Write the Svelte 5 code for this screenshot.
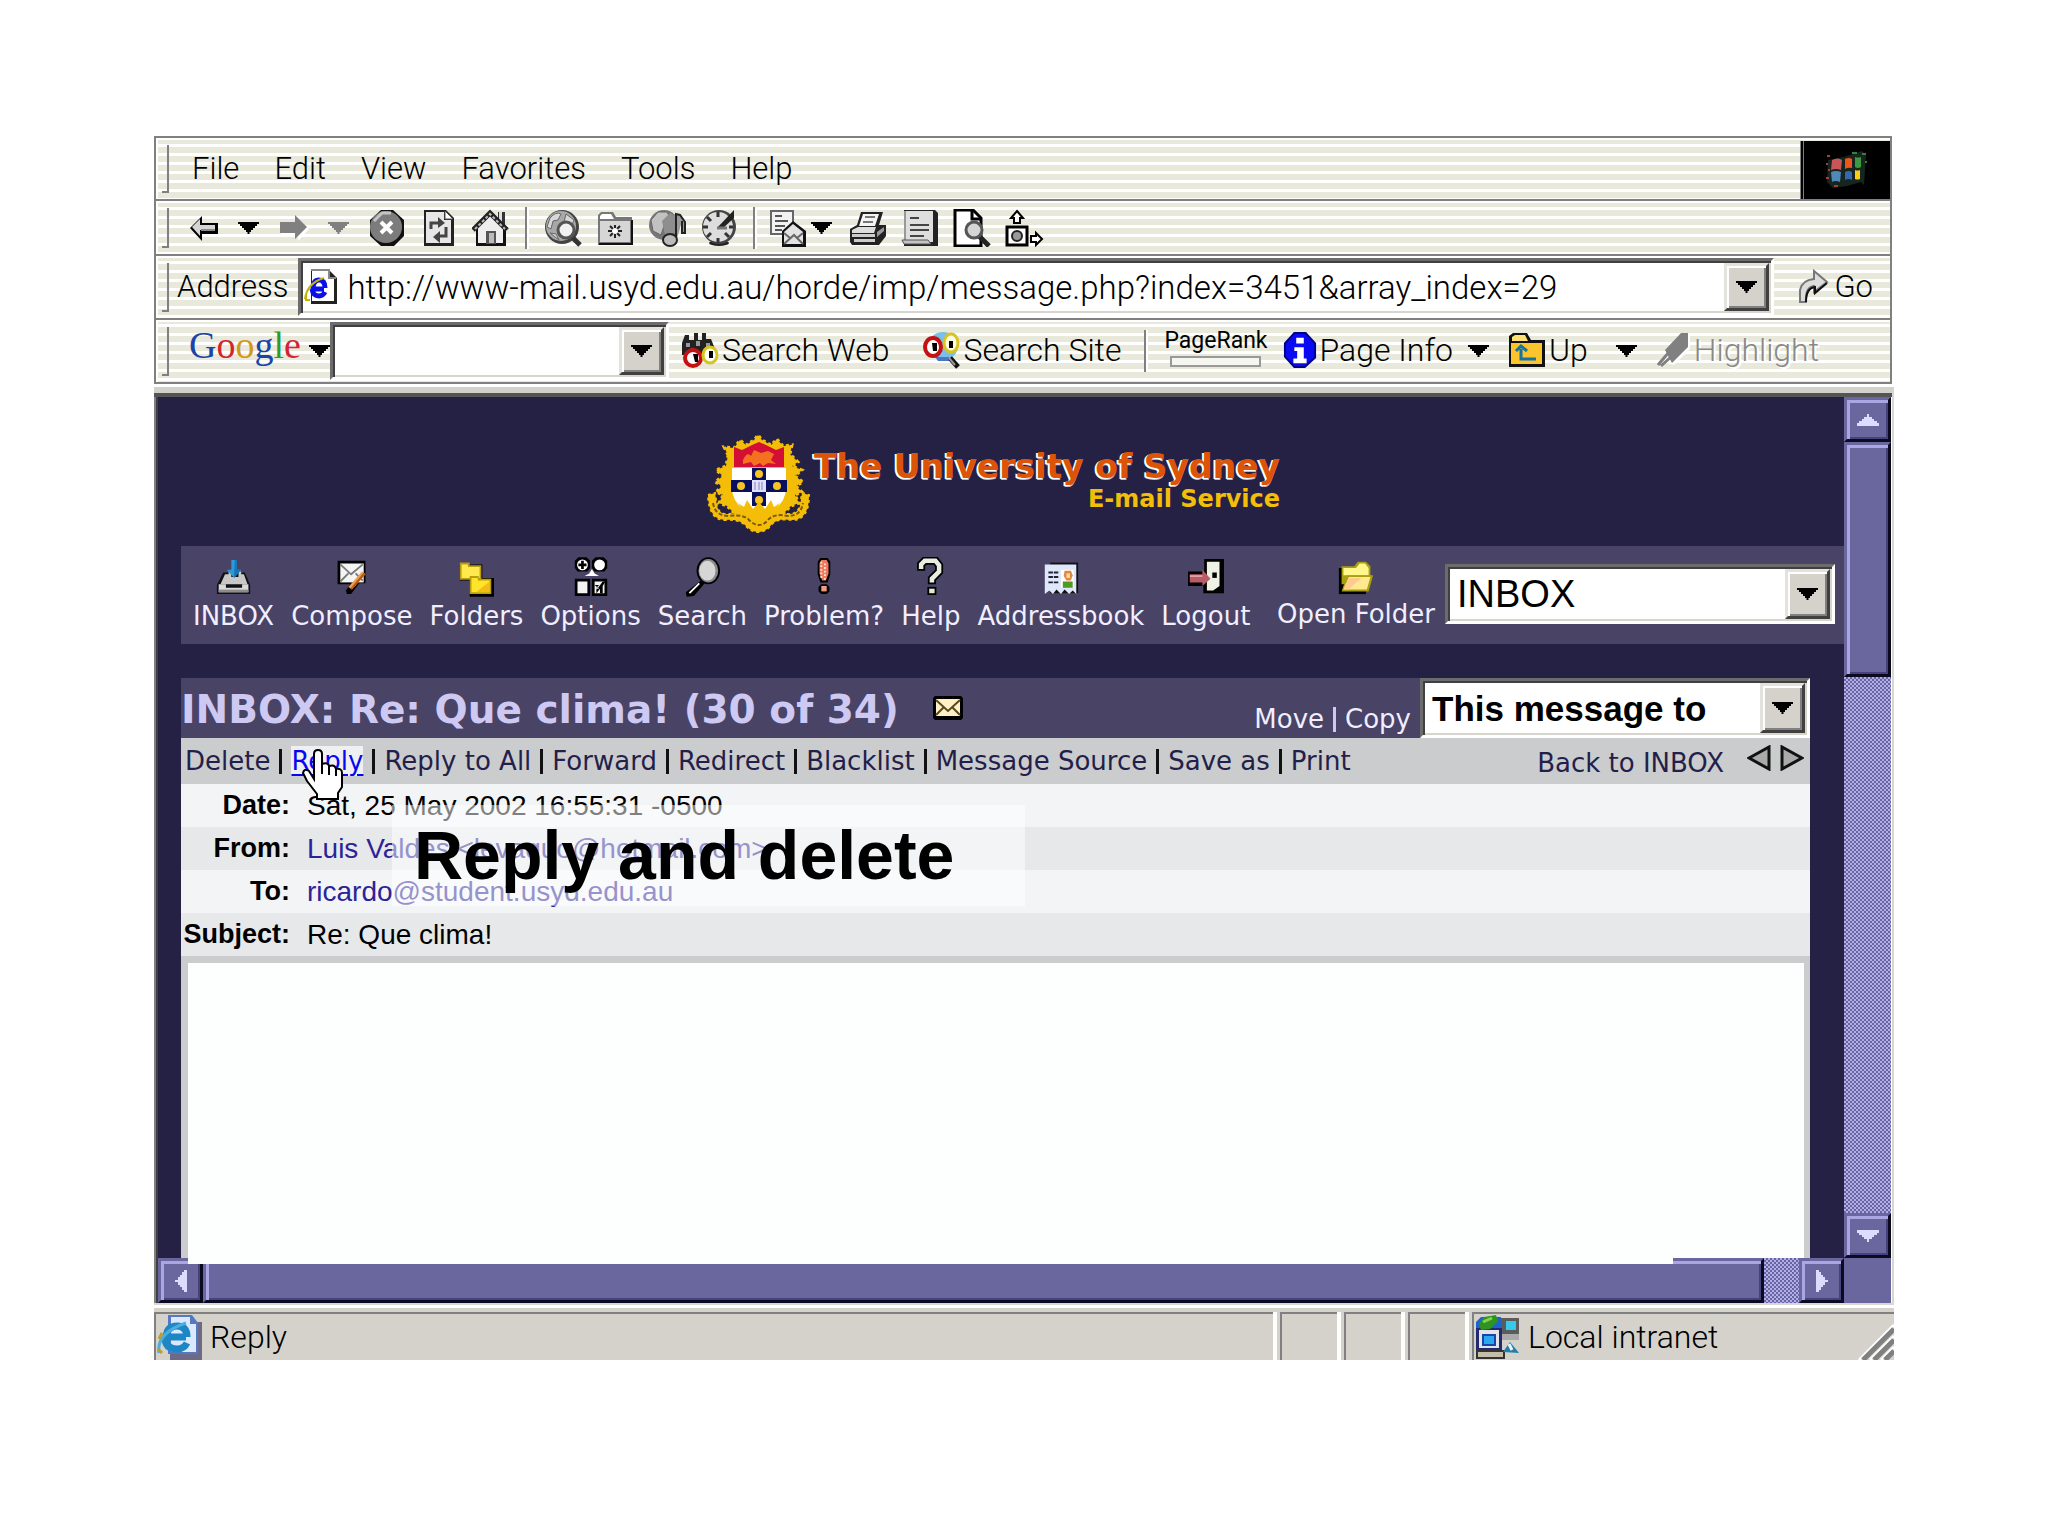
<script>
  const menus = ['File', 'Edit', 'View', 'Favorites', 'Tools', 'Help'];
  const navItems = ['INBOX', 'Compose', 'Folders', 'Options', 'Search', 'Problem?', 'Help', 'Addressbook', 'Logout'];
  const actions = ['Delete', 'Reply', 'Reply to All', 'Forward', 'Redirect', 'Blacklist', 'Message Source', 'Save as', 'Print'];
  const google = [['G', 'blue'], ['o', 'red'], ['o', 'gold'], ['g', 'blue'], ['l', 'green'], ['e', 'red']];
  let url = $state('http://www-mail.usyd.edu.au/horde/imp/message.php?index=3451&array_index=29');
  let query = $state('');
</script>

{#snippet caret(color)}
  <svg class="caret" width="21" height="12" viewBox="0 0 21 12" aria-hidden="true"><path fill={color} d="M0 0H21V2H19V4H17V6H15V8H13V10H11.500V12H9.500V10H8V8H6V6H4V4H2V2H0z" /></svg>
{/snippet}

{#snippet handle()}<span class="handle"></span>{/snippet}

{#snippet navIcon(name)}
  <svg width="36" height="40" viewBox="0 0 40 44" aria-hidden="true">
    {#if name === 'INBOX'}
      <path d="M8 17h24l6 14v10H1V31z" fill="#111" />
      <path d="M10 19h4v-3h3v6h8v-6h3v3h3l4 11H5z" fill="#c8c8c8" />
      <path d="M3 30h8v4h18v-4h7v9H3z" fill="#dadada" /><path d="M3 36h33v3H3z" fill="#8c8c8c" />
      <path d="M17 3h6v11h5l-8 9-8-9h5z" fill="#2b9bd8" /><path d="M21 3h2v11h5l-8 9z" fill="#1774b5" />
    {:else if name === 'Compose'}
      <path d="M4 4h31v25h-7l-9 12h-5v-5l4-6H4z" fill="#000" />
      <path d="M7 7h26v21H7z" fill="#f4f4f4" /><path d="M7 8l12 11L32 8M7 27l9-9M24 18l8 8" fill="none" stroke="#777" stroke-width="2" />
      <path d="M31 16l4 3-15 17-4-3z" fill="#f0a050" /><path d="M33 17l2 2-15 17-2-1z" fill="#b35a10" /><path d="M13 37l4-3 2 2-4 4z" fill="#000" />
    {:else if name === 'Folders'}
      <path d="M2 8h25v18H2zM13 23h27v21H13z" fill="#000" />
      <path d="M2 6h11v3h13v16H2z" fill="#b99c10" /><path d="M4 8h7v3h13v12H4z" fill="#ffe94c" />
      <path d="M13 21h10v3h14v17H13z" fill="#b99c10" /><path d="M15 23h7v3h13v13H15z" fill="#ffe52a" /><path d="M35 27v12H20z" fill="#f4bc14" />
    {:else if name === 'Options'}
      <path d="M6 0h9l4 4v8l-3 4H5l-3-4V4zM25 0h9l4 4v8l-3 4H24l-3-4V4zM2 24h17v19H2zM21 24h17v19H21z" fill="#000" />
      <circle cx="10.500" cy="8.500" r="6" fill="#fff" /><circle cx="29.500" cy="8.500" r="6" fill="#fff" />
      <path d="M9 4h3v3h3v3h-3v3H9v-3H6V7h3z" fill="#000" /><path d="M21 13l3 5 5 3H13l5-3z" fill="#fff" />
      <path d="M5 27h11v13H5zM24 27h11v13H24z" fill="#f2f2f2" /><path d="M24 31h5l-3 3h2l5-7h3l-3 5v8h-3v-5l-4 5v-5h3z" fill="#000" />
    {:else if name === 'Search'}
      <path d="M19 26l4 3-12 14-8 1-1-5z" fill="#000" /><ellipse cx="27" cy="15" rx="13" ry="15" fill="#000" />
      <ellipse cx="27" cy="15" rx="11" ry="13" fill="#8a8a8a" /><ellipse cx="26" cy="15" rx="9" ry="11" fill="#d6d6d6" />
      <path d="M6 40l11-11" stroke="#fff" stroke-width="2" />
    {:else if name === 'Problem?'}
      <path d="M16 1h8l3 4v14l-3 9h-8l-3-9V5zM17 30h6l3 3v5l-3 3h-6l-3-3v-5z" fill="#000" />
      <path d="M17 3h6l2 4v11l-3 8h-4l-3-8V7z" fill="#f0795c" /><path d="M17 5v20M21 7v18" stroke="#ffe6dc" stroke-width="2" stroke-dasharray="2 2" /><path d="M17 32h6v6h-6z" fill="#f09a80" />
    {:else if name === 'Help'}
      <path d="M9 15V8l4-4h12l4 5v7l-8 8v6" fill="none" stroke="#000" stroke-width="9" />
      <path d="M9 13V8l4-4h12l4 5v7l-8 8v4" fill="none" stroke="#e8efe0" stroke-width="5" />
      <path d="M16 33h10v9H16z" fill="#000" /><path d="M18 35h6v5h-6z" fill="#dfeccb" />
    {:else if name === 'Addressbook'}
      <path d="M8 6h31v34H8z" fill="#111" /><path d="M2 8h35v33l-4-4-4 4-5-5-4 5-5-5-4 5-4-4-5 4z" fill="#dfe8fa" />
      <path d="M6 17h12M6 22h12M6 28h12" stroke="#223" stroke-width="2" stroke-dasharray="5 1" />
      <path d="M20 14h14v20H20z" fill="#fff" /><path d="M24 15h7l2 5-2 6h-5l-3-5z" fill="#e3883a" /><path d="M26 18h4v5h-4z" fill="#ffd7a8" /><path d="M22 27h11v7H22z" fill="#4f9a24" />
    {:else if name === 'Logout'}
      <path d="M18 2h22v38H17v-8H0V16h18z" fill="#000" /><path d="M21 5h14v27l-7 5h-7z" fill="#eef2e4" />
      <path d="M27 17h5v6h-5z" fill="#000" /><path d="M2 19h14v-5l9 10-9 8v-4H2z" fill="#b75c68" /><path d="M2 21h14" stroke="#e5a0a5" stroke-width="2" />
    {:else}
      <path d="M1 12h30v29H1z" fill="#000" /><path d="M4 10h14l4-5h9l5 5v20H4z" fill="#a8a010" /><path d="M6 12h14l4-5h6l4 5v8H6z" fill="#fff68c" />
      <path d="M10 20h29l-5 18H4z" fill="#a8a010" /><path d="M12 22h24l-4 14H6z" fill="#ffe890" /><path d="M12 23h14L11 36H7z" fill="#ffc890" />
    {/if}
  </svg>
{/snippet}

<main>
  <section class="chrome">
    <div class="row menu">
      {@render handle()}
      <nav class="menus">{#each menus as m}<button type="button">{m}</button>{/each}</nav>
      <span class="flag">
        <svg width="46" height="40" viewBox="0 0 46 40" aria-hidden="true">
          <path d="M4 10l16-3 18-6 4 4-2 30-3-3-14 4-14 2-6-6z" fill="#17251f" />
          <path d="M8 10q6-3 10 0l-1 10q-5-2-10 0z" fill="#c9545a" /><path d="M7 22q5-2 10 0l-1 10q-5-2-8 0z" fill="#5088b8" />
          <path d="M21 9q4-2 7 0v9q-4-1-7 1z" fill="#ee5518" /><path d="M21 22q4-2 7 0v8q-4-2-7 0z" fill="#3566b0" />
          <path d="M31 7q3 1 6 0v10q-3 2-6 0z" fill="#3d9940" /><path d="M31 20q3 1 5 0v9q-3 1-5 0z" fill="#f7d016" />
          <path d="M3 6h3M2 14h2M4 20h2M2 28h3M10 36h4" stroke="#a04040" stroke-width="2" /><path d="M28 3h5M38 4h4M41 12h2" stroke="#348044" stroke-width="2" />
        </svg>
      </span>
    </div>

    <div class="row tools">
      {@render handle()}
      <button type="button" class="slot narrow" aria-label="Back"><svg width="30" height="28" viewBox="0 0 30 28"><path d="M1 14L13 2v7h16v11H13v7z" fill="#000" /><path d="M3 13L11 5v6h15v5H11v6z" fill="#d5d5d5" /><path d="M12 16h14" stroke="#888" stroke-width="2" /></svg></button>
      <button type="button" class="slot narrow" aria-label="Back history">{@render caret('#000')}</button>
      <button type="button" class="slot narrow" aria-label="Forward"><svg width="30" height="28" viewBox="0 0 30 28"><path d="M2 10h17V4l11 11-11 12v-6H2z" fill="#fff" /><path d="M1 8h15V1l12 12-12 12v-6H1z" fill="#808080" /></svg></button>
      <button type="button" class="slot narrow" aria-label="Forward history">{@render caret('#808080')}</button>
      <button type="button" class="slot" aria-label="Stop"><svg width="38" height="38" viewBox="0 0 38 38"><path d="M13 1h12l11 10v16L26 37H13L2 27V11z" fill="#111" /><circle cx="18" cy="18" r="16" fill="#7c7c7c" /><path d="M6 12l8-8h9" fill="none" stroke="#c4c4c4" stroke-width="3" /><path d="M13 13l11 11M24 13L13 24" stroke="#fff" stroke-width="4" /></svg></button>
      <button type="button" class="slot" aria-label="Refresh"><svg width="34" height="38" viewBox="0 0 34 38"><path d="M2 1h22l8 8v28H2z" fill="#222" /><path d="M4 3h18v8h7v23H4z" fill="#e6e6e6" /><path d="M23 2v8h8z" fill="#fff" stroke="#555" /><path d="M9 20v-6h9M24 18v9h-8" fill="none" stroke="#444" stroke-width="3" /><path d="M16 8l7 6-7 5zM18 22l-7 6 7 6z" fill="#444" /></svg></button>
      <button type="button" class="slot" aria-label="Home"><svg width="38" height="38" viewBox="0 0 38 38"><path d="M4 20h30v17H4z" fill="#111" /><path d="M18 6l13 13v15H6V19z" fill="#eee" /><path d="M26 3h7v16l-7-6z" fill="#333" /><path d="M27 3h3v11l-3-3z" fill="#ddd" /><path d="M1 21L18 4l17 17" fill="none" stroke="#222" stroke-width="5" /><path d="M3 20L18 5l15 15" fill="none" stroke="#bbb" stroke-width="2" stroke-dasharray="3 2" /><path d="M14 22h10v13H14z" fill="#555" /><path d="M17 24h5v10h-5z" fill="#bbb" /></svg></button>
      <span class="sep"></span>
      <button type="button" class="slot" aria-label="Search"><svg width="38" height="38" viewBox="0 0 38 38"><circle cx="18" cy="18" r="17" fill="#444" /><circle cx="17" cy="17" r="15" fill="#a8a8a8" /><path d="M6 9q6-7 11-4l-3 6-5 1-2 8-4-2zM22 5l8 6-2 5-8-3zM6 24l6 1 3 6z" fill="#d8d8d8" stroke="#666" /><path d="M29 29l7 7" stroke="#333" stroke-width="5" /><circle cx="22" cy="21" r="8" fill="#f2f2f2" stroke="#555" stroke-width="3" /></svg></button>
      <button type="button" class="slot" aria-label="Favorites"><svg width="38" height="36" viewBox="0 0 38 36"><path d="M2 9V5l3-3h12l3 5h16v28H2z" fill="#777" /><path d="M4 9V6l2-2h9l3 5z" fill="#fff" /><path d="M4 11h30v21H4z" fill="#d6d6d6" /><path d="M36 10v24H3" fill="none" stroke="#111" stroke-width="2" /><path d="M19 15v13M12 21h14M14 16l10 10M24 16L14 26" stroke="#222" stroke-width="2" /><circle cx="19" cy="21" r="3" fill="#fff" /></svg></button>
      <button type="button" class="slot" aria-label="Media"><svg width="38" height="38" viewBox="0 0 38 38"><circle cx="16" cy="16" r="15" fill="#777" /><path d="M3 11l7-8h9l4 7-6 4-4 12-8-4z" fill="#c2c2c2" stroke="#666" /><path d="M14 12l8-8 7 4-2 16-10 2z" fill="#8e8e8e" /><path d="M28 33V5l4 1 5 7v11h-3V12" fill="#999" stroke="#222" stroke-width="2" /><ellipse cx="22" cy="31" rx="7" ry="6" fill="#bbb" stroke="#222" stroke-width="2" /></svg></button>
      <button type="button" class="slot" aria-label="History"><svg width="38" height="38" viewBox="0 0 38 38"><ellipse cx="19" cy="34" rx="10" ry="3" fill="#222" /><circle cx="19" cy="18" r="17" fill="#444" /><circle cx="18" cy="18" r="15" fill="#ddd" /><path d="M18 3v5M18 29v5M3 18h5M29 18h4M7 8l4 4M7 28l4-4M29 28l-4-4" stroke="#333" stroke-width="3" /><path d="M17 19L34 1v8L22 20z" fill="#222" /><path d="M17 19h10" stroke="#777" stroke-width="3" /></svg></button>
      <span class="sep"></span>
      <button type="button" class="slot mail" aria-label="Mail"><svg width="38" height="38" viewBox="0 0 38 38"><path d="M1 1h24v25H1z" fill="#666" /><path d="M3 3h20v21H3z" fill="#f2f2f2" /><path d="M6 7h7M6 12h13M6 17h10M6 21h7" stroke="#555" stroke-width="2" /><path d="M13 22l11-10 13 10v16H13z" fill="#111" /><path d="M15 23l9-8 10 8v12H15z" fill="#e3e3e3" /><path d="M15 35l10-9 9 9M15 24l6 5M34 24l-6 5" fill="none" stroke="#666" stroke-width="2" /></svg>{@render caret('#000')}</button>
      <button type="button" class="slot" aria-label="Print"><svg width="38" height="36" viewBox="0 0 38 36"><path d="M12 2h22l-4 13h7v11l-7 9H3l-2-3V19l7-4z" fill="#222" /><path d="M14 4h16l-4 12H10z" fill="#f4f4f4" /><path d="M16 7h10M14 12h10" stroke="#777" stroke-width="2" /><path d="M3 20l6-3h18l-2 6H3z" fill="#ddd" /><path d="M3 24h23v3H3zM5 29h21v3H5z" fill="#ccc" /><path d="M28 22l7-5v4l-7 6z" fill="#999" /></svg></button>
      <button type="button" class="slot" aria-label="Edit"><svg width="38" height="38" viewBox="0 0 38 38"><path d="M3 1h31l3 3v33H3z" fill="#222" /><path d="M4 2h28v31H4z" fill="#dedede" /><path d="M4 2v31" stroke="#999" stroke-width="2" /><path d="M9 9h9M9 16h19M9 21h19M9 27h14" stroke="#444" stroke-width="2" /><path d="M1 31h26l3 4H3z" fill="#c4c4c4" stroke="#555" /></svg></button>
      <button type="button" class="slot" aria-label="Print preview"><svg width="38" height="38" viewBox="0 0 38 38"><path d="M2 1h18l8 8v28H2z" fill="#fff" stroke="#000" stroke-width="3" /><path d="M19 1v9h9" fill="none" stroke="#000" stroke-width="3" /><path d="M26 27l10 10" stroke="#222" stroke-width="5" /><circle cx="21" cy="21" r="8" fill="#d5d5d5" stroke="#555" stroke-width="3" /></svg></button>
      <button type="button" class="slot" aria-label="Move"><svg width="40" height="38" viewBox="0 0 40 38"><path d="M3 18h20v18H3z" fill="#fff" stroke="#000" stroke-width="3" /><circle cx="13" cy="27" r="5" fill="#999" stroke="#222" stroke-width="2" /><path d="M13 2l6 7h-3v5h-6V9H7zM38 30l-6-6v3h-5v6h5v3z" fill="#fff" stroke="#000" stroke-width="2" /></svg></button>
    </div>

    <div class="row address">
      {@render handle()}
      <label for="address">Address</label>
      <span class="combo">
        <svg class="page-icon" width="34" height="36" viewBox="0 0 34 36" aria-hidden="true"><path d="M7 1h18l8 8v26H7z" fill="#222" /><path d="M8 2h16v8h6v22H8z" fill="#fff" /><path d="M7 1h18v8h7" fill="none" stroke="#888" stroke-width="2" /><path d="M20 20H9q0-9 6-9t6 8M8 20q1 7 7 7 4 0 6-4" fill="none" stroke="#0a10e8" stroke-width="5" /><path d="M1 30Q3 14 20 9M2 25v6h4" fill="none" stroke="#c2b400" stroke-width="2" /></svg>
        <input id="address" type="text" bind:value={url} />
        <button type="button" class="drop" aria-label="Show addresses">{@render caret('#000')}</button>
      </span>
      <button type="button" class="go"><svg width="32" height="36" viewBox="0 0 32 36" aria-hidden="true"><path d="M5 33H2V21q2-10 14-11V2l13 11-13 10v-6q-9 1-8 16z" fill="#ddd" stroke="#777" stroke-width="2" /><path d="M29 14L17 24v-6q-9 1-9 15" fill="none" stroke="#111" stroke-width="2" /></svg>Go</button>
    </div>

    <div class="row google">
      {@render handle()}
      <button type="button" class="brand" aria-label="Google menu">{#each google as [c, tone]}<span class={tone}>{c}</span>{/each}</button>
      {@render caret('#000')}
      <span class="combo search">
        <input type="text" aria-label="Search terms" bind:value={query} />
        <button type="button" class="drop" aria-label="Show searches">{@render caret('#000')}</button>
      </span>
      <button type="button" class="tool web"><svg width="38" height="38" viewBox="0 0 38 38" aria-hidden="true"><path d="M4 4h4v5h5V2h4v7h4V2h4v6h5l4 10-2 6H1V12z" fill="#222" /><path d="M5 12h4v4H5zM15 10h4v5h-4zM25 12h4v4h-4zM10 17h3v3h-3z" fill="#999" /><ellipse cx="12" cy="27" rx="8" ry="8" fill="#fff" stroke="#c41212" stroke-width="4" /><path d="M12 23h5v8h-3z" fill="#000" /><ellipse cx="29" cy="24" rx="7" ry="8" fill="#fff" stroke="#d8c420" stroke-width="3" /><path d="M28 20h4v7h-4z" fill="#000" /></svg>Search Web</button>
      <button type="button" class="tool site"><svg width="38" height="38" viewBox="0 0 38 38" aria-hidden="true"><ellipse cx="21" cy="15" rx="15" ry="14" fill="#78bfec" /><path d="M13 26h14v4H16z" fill="#4b76c8" /><path d="M28 27l8 9" stroke="#111" stroke-width="5" /><path d="M27 27l6 7" stroke="#999" stroke-width="2" /><ellipse cx="11" cy="16" rx="8" ry="9" fill="#fff" stroke="#c41212" stroke-width="4" /><path d="M10 12h5v8h-4z" fill="#000" /><ellipse cx="29" cy="12" rx="7" ry="9" fill="#fffbe0" stroke="#d8c420" stroke-width="3" /><path d="M27 10h4v7h-4z" fill="#000" /></svg>Search Site</button>
      <span class="sep"></span>
      <span class="rank"><span>PageRank</span><span class="meter"></span></span>
      <button type="button" class="tool info"><svg width="34" height="36" viewBox="0 0 36 38" aria-hidden="true"><path d="M12 1h12l10 11v15L23 37H12L2 26V12z" fill="#0909f4" stroke="#000088" stroke-width="2" /><path d="M14 6h8v6h-8zM12 16h10v12h3v5H11v-5h4v-8h-3z" fill="#fff" /></svg>Page Info</button>
      {@render caret('#000')}
      <button type="button" class="tool up"><svg width="38" height="36" viewBox="0 0 38 36" aria-hidden="true"><path d="M1 35V4l4-3h14l4 7h14v27z" fill="#111" /><path d="M4 9V5l3-2h10l3 6z" fill="#ffe070" /><path d="M3 11h31v21H3z" fill="#fbc42c" /><path d="M13 17v10h15M8 19l5-5 6 5" fill="none" stroke="#1473a0" stroke-width="3" /></svg>Up</button>
      {@render caret('#000')}
      <button type="button" class="tool highlight" disabled><svg width="34" height="36" viewBox="0 0 34 36" aria-hidden="true"><path d="M10 20L26 3l7 1v13L17 33l-7-2-8 4z" fill="#fff" /><path d="M8 18L24 1h7v14L15 31z" fill="#808080" /><path d="M1 33l12-14M4 34l12-11" stroke="#808080" stroke-width="3" /></svg>Highlight</button>
    </div>
  </section>

  <section class="viewport">
    <div class="page">
      <header>
        <svg width="105" height="98" viewBox="0 0 105 98" aria-hidden="true">
          <path d="M22 20l-4-8 10 1 6-8 6 5 8-5 4-5 4 5 9 5 6-6 6 7 9-1-2 9 8 8-6 4 10 4-7 6 8 6-7 4 6 6-7 3 4 8-8 3-8 8-11 8-13 6-13-6-11-8-8-8-8-3 4-8-7-3 6-6-7-4 8-6-7-6 10-4z" fill="#f4bd08" stroke="#f4bd08" stroke-width="3" stroke-dasharray="3 3" />
          <path d="M26 33h54v20q0 20-27 29Q26 73 26 53z" fill="#fff" />
          <path d="M28 12l8 3 10-5 7-3 7 3 10 5 8-3v20H28z" fill="#d40f35" />
          <path d="M37 25q4-9 8-4l3-6 7 3 7-2 6 3-3 6 5 4-8-1-5 3-3-3-6 3-3-4-8 2z" fill="#f6711f" />
          <path d="M46 33h14v38H46zM25 45h56v12H25z" fill="#0a1060" /><path d="M46 45h14v12H46z" fill="#dfe0fa" />
          <path d="M49 47v8M53 47v8M56 47v8" stroke="#8080c0" />
          <g fill="#f6c522"><circle cx="53" cy="39" r="4" /><circle cx="35" cy="51" r="4" /><circle cx="71" cy="51" r="4" /><circle cx="53" cy="65" r="4" /></g>
          <path d="M32 68l6 4 3-7 6 9 6-7 6 7 6-9 3 7 6-4-8 12-13 6-13-6z" fill="#f4bd08" />
          <path d="M2 60l7-2 2 13q2 9 12 8l13-1q8 1 16 11 8-10 16-11l13 1q10 1 13-8l2-13 7 2q0 25-17 25-15-2-20 4-6 8-14 8-7 0-13-7-6-6-20-5Q3 85 2 60z" fill="#f4bd08" stroke="#f4bd08" stroke-dasharray="3 3" stroke-width="2" />
          <path d="M7 68q2 13 16 13 15-2 20 4 5 5 10 5 5 0 9-5 6-7 20-4 13 0 15-13" fill="none" stroke="#7a5a10" stroke-width="2" stroke-dasharray="4 2" />
        </svg>
        <h1>The University of Sydney<small>E-mail Service</small></h1>
      </header>

      <nav class="nav">
        {#each navItems as item}<a href="#top">{@render navIcon(item)}{item}</a>{/each}
        <label class="open" for="folder">{@render navIcon('Open')}Open Folder</label>
        <span class="combo folder">
          <select id="folder"><option>INBOX</option></select>
          <span class="drop" aria-hidden="true">{@render caret('#000')}</span>
        </span>
      </nav>

      <article>
        <div class="title">
          <h2>INBOX: Re: Que clima! (30 of 34)</h2>
          <svg width="30" height="24" viewBox="0 0 30 24" aria-hidden="true"><path d="M2 0h26l2 2v20l-2 2H2l-2-2V2z" fill="#000" /><path d="M3 3h24v17H3z" fill="#fff1c4" /><path d="M3 4l12 11L27 4M3 19l8-8M27 19l-8-8" fill="none" stroke="#55471f" stroke-width="2" /></svg>
          <div class="move"><a href="#move">Move</a><i></i><a href="#copy">Copy</a></div>
          <span class="combo to">
            <select aria-label="Move or copy"><option>This message to</option></select>
            <span class="drop" aria-hidden="true">{@render caret('#000')}</span>
          </span>
        </div>
        <nav class="actions">
          {#each actions as a, i}
            {#if i}<i></i>{/if}
            <a href="#action" class:active={a === 'Reply'}>{a}{#if a === 'Reply'}<svg class="cursor" width="42" height="52" viewBox="0 0 42 52" aria-hidden="true"><path d="M12 30V5q0-4 4-4t4 4v10q6-2 7 2 6-2 7 3 6-1 6 4v14l-4 6v6H15v-5L5 32l-4-8q1-5 6-2z" fill="#fff" stroke="#000" stroke-width="2" /><path d="M20 14v11M27 17v9M34 20v7" stroke="#000" stroke-width="2" /></svg>{/if}</a>
          {/each}
          <a class="back" href="#inbox">Back to INBOX</a>
          <a class="step" href="#prev" aria-label="Previous message"><svg width="24" height="26" viewBox="0 0 24 26"><path d="M22 2v22L2 13z" fill="#aaa" stroke="#111" stroke-width="3" /></svg></a>
          <a class="step" href="#next" aria-label="Next message"><svg width="24" height="26" viewBox="0 0 24 26"><path d="M2 2v22l20-11z" fill="#aaa" stroke="#111" stroke-width="3" /></svg></a>
        </nav>
        <table>
          <tbody>
            <tr><th scope="row">Date:</th><td>Sat, 25 May 2002 16:55:31 -0500</td></tr>
            <tr><th scope="row">From:</th><td><a href="#from">Luis Valdes &lt;levaquo@hotmail.com&gt;</a></td></tr>
            <tr><th scope="row">To:</th><td><a href="#to">ricardo@student.usyd.edu.au</a></td></tr>
            <tr><th scope="row">Subject:</th><td>Re: Que clima!</td></tr>
          </tbody>
        </table>
        <div class="body"></div>
        <div class="caption">Reply and delete</div>
      </article>
    </div>

    <div class="vscroll">
      <button type="button" class="bevel" aria-label="Scroll up"><svg width="22" height="12" viewBox="0 0 22 12"><path d="M0 12V9h2V7h3V5h2V3h3V0h2v3h3v2h2v2h3v2h2v3z" fill="#dcdcff" /></svg></button>
      <div class="bevel thumb"></div>
      <div class="track"></div>
      <button type="button" class="bevel" aria-label="Scroll down"><svg width="22" height="12" viewBox="0 0 22 12"><path d="M0 0v3h2v2h3v2h2v2h3v3h2V9h3V7h2V5h3V3h2V0z" fill="#dcdcff" /></svg></button>
    </div>
    <div class="hscroll">
      <button type="button" class="bevel" aria-label="Scroll left"><svg width="12" height="22" viewBox="0 0 12 22"><path d="M12 0H9v2H7v3H5v2H3v3H0v2h3v3h2v2h2v3h2v2h3z" fill="#dcdcff" /></svg></button>
      <div class="bevel thumb"></div>
      <div class="track"></div>
      <button type="button" class="bevel" aria-label="Scroll right"><svg width="12" height="22" viewBox="0 0 12 22"><path d="M0 0h3v2h2v3h2v2h2v3h3v2H9v3H7v2H5v3H3v2H0z" fill="#dcdcff" /></svg></button>
      <span class="patch"></span>
    </div>
    <div class="corner"></div>
  </section>

  <footer>
    <div class="cell status">
      <svg width="46" height="46" viewBox="0 0 46 46" aria-hidden="true"><path d="M14 8h32v38H14z" fill="#6d6a88" /><path d="M12 1h24l6 8v31H12z" fill="#5578c0" /><path d="M15 3h19v7h6v28H15z" fill="#dce8ff" /><path d="M30 23H10q1-11 11-11t10 11M9 23q0 12 12 12 7 0 10-6" fill="none" stroke="#1d86c4" stroke-width="7" /><path d="M3 39Q0 19 30 9" fill="none" stroke="#4aaee0" stroke-width="3" /><path d="M3 25l3-6M2 35l4 4" stroke="#b8a030" stroke-width="3" /></svg>
      Reply
    </div>
    <div class="cell"></div><div class="cell"></div><div class="cell"></div>
    <div class="cell zone">
      <svg width="46" height="46" viewBox="0 0 46 46" aria-hidden="true"><path d="M2 8l5-5h20v13H2z" fill="#1e64c8" /><path d="M27 4h18v21H27z" fill="#5c5c5c" /><path d="M32 7h10v9H32z" fill="#35c9ee" /><path d="M28 20h17v6H28z" fill="#aaa" /><path d="M2 14h26v22H2z" fill="#222a70" /><path d="M5 16h20v18H5z" fill="#e3e3ea" /><path d="M9 21h12v10H9z" fill="#2aa7ef" stroke="#1846a8" stroke-width="2" /><path d="M2 36h29v9H2z" fill="#333" /><path d="M4 38h25v5H4z" fill="#c5bda8" /><path d="M29 38l7-10 9 11z" fill="#247fa8" /><path d="M35 30l3 6" stroke="#e8f4ff" stroke-width="3" /><path d="M5 10l5-7 12-2 2 6-8 8-9 1z" fill="#2f9322" /><path d="M9 8l9-4" stroke="#87d44c" stroke-width="3" /></svg>
      Local intranet
      <svg class="grip" width="36" height="36" viewBox="0 0 36 36" aria-hidden="true"><path d="M1 36L36 1M12 36L36 12M23 36L36 23" stroke="#fff" stroke-width="3" /><path d="M5 36L36 5M16 36L36 16M27 36L36 27" stroke="#808080" stroke-width="5" /></svg>
    </div>
  </footer>
</main>

<style>
  :global(body) { background: #fff; }
  * { box-sizing: border-box; }
  main { margin: 136px 154px; font-family: Roboto, "Liberation Sans", sans-serif; font-size: 31px; font-weight: 300; line-height: 36px; color: #000; }
  button, input, select { font: inherit; color: inherit; background: none; border: 0; padding: 0; margin: 0; border-radius: 0; }
  button { display: flex; align-items: center; justify-content: center; }
  svg { display: block; flex: none; }
  a { color: inherit; text-decoration: none; }
  h1, h2 { margin: 0; }

  .chrome { margin-right: 2px; border: 2px solid #808080; border-bottom-width: 0; background: repeating-linear-gradient(#e8e9da 0 6px, #fff 6px 9px); }
  .row { display: flex; align-items: center; border-bottom: 2px solid #808080; box-shadow: inset 2px 2px #fff; white-space: nowrap; }
  .handle { align-self: stretch; flex: none; width: 7px; margin: 7px 0 6px 6px; border-right: 2px solid #808080; border-bottom: 2px solid #808080; }
  .menu { min-height: 63px; }
  .tools { min-height: 55px; }
  .address { min-height: 64px; }
  .google { min-height: 64px; font-size: 32px; }
  .menus { display: flex; gap: 35px; margin-left: 23px; flex: 1; }
  .flag { display: flex; align-items: center; justify-content: center; width: 90px; align-self: stretch; margin-top: 3px; background: #000; border-left: 4px double #808080; }
  .slot { width: 52px; flex: none; }
  .slot.narrow { width: 45px; }
  .tools .handle { margin-right: 12px; }
  .slot.mail { width: 70px; gap: 4px; margin-right: 7px; }
  .sep { flex: none; width: 4px; height: 42px; margin: 0 8px; border-left: 2px solid #808080; border-right: 2px solid #fff; }

  .combo { display: flex; align-items: stretch; height: 58px; background: #fff; border: 3px solid; border-color: #6c6c6c #fff #fff #6c6c6c; box-shadow: inset 2px 2px #404040, inset -2px -2px #d8d5ce; padding: 2px; }
  .combo input, .combo select { flex: 1; min-width: 0; appearance: none; outline: 0; }
  .drop { display: flex; flex: none; align-items: center; justify-content: center; width: 45px; background: #d5d2cb; border: 3px solid; border-color: #e4e2dc #404040 #404040 #e4e2dc; box-shadow: inset 2px 2px #fff, inset -2px -2px #808080; }
  .address label { margin: 0 10px 0 8px; }
  .address .combo { flex: 1; }
  .address input { font-size: 33px; padding-top: 2px; }
  .page-icon { align-self: center; margin: 0 9px 0 1px; }
  .go { gap: 4px; margin: 0 17px 0 24px; }
  .brand { font: 38px/44px "Liberation Serif", serif; margin: 0 8px 12px 20px; }
  .blue { color: #1a45a8; } .red { color: #d42432; } .gold { color: #d09a18; } .green { color: #2f9a28; }
  .combo.search { width: 339px; }
  .tool { gap: 3px; padding-bottom: 3px; }
  .web { margin-left: 12px; }
  .site { margin-left: 33px; }
  .google .sep { margin: 0 16px 0 23px; }
  .rank { display: flex; flex-direction: column; align-items: center; font-size: 23px; line-height: 24px; font-weight: 400; gap: 3px; margin-bottom: 6px; }
  .meter { width: 91px; height: 11px; border: 2px solid #999; background: #f6f6f0; }
  .info { margin: 0 15px 0 15px; }
  .up { margin: 0 28px 0 19px; }
  .highlight { margin-left: 20px; color: #888; text-shadow: 2px 2px #fff; }

  .viewport { display: grid; grid-template-columns: minmax(0, 1fr) 47px; grid-template-rows: auto 45px; margin-top: 3px; border-top: 6px solid #d2d1cb; box-shadow: inset 0 4px #555, inset 2px 0 #808080, inset 4px 0 #404040; padding: 4px 1px 0 4px; border-bottom: 2px solid #d8d8d2; border-right: 2px solid #d8d8d2; }
  .page { background: #252144; display: flex; flex-direction: column; padding-left: 23px; font-family: "DejaVu Sans", Verdana, sans-serif; font-size: 26px; line-height: 30px; font-weight: 400; }
  header { display: flex; justify-content: center; align-items: center; gap: 3px; height: 149px; padding: 30px 39px 0 0; }
  header svg { margin-bottom: 6px; }
  h1 { color: #dc5408; font-size: 33px; line-height: 36px; font-weight: 700; text-shadow: -2px 1px #fff, -1px 2px #c8b8c8; margin-bottom: 12px; }
  small { display: block; text-align: right; font-size: 24px; line-height: 28px; color: #f2be0a; text-shadow: none; }
  .nav { display: flex; align-items: flex-start; gap: 17px; min-height: 98px; padding: 11px 9px 0 12px; background: #494366; color: #f0eeff; white-space: nowrap; }
  .nav a, .open { display: flex; flex-direction: column; align-items: center; gap: 4px; }
  .open { margin-left: auto; gap: 2px; }
  .nav .combo { height: 60px; width: 390px; margin-top: 7px; margin-left: -7px; }
  select { padding-left: 7px; font-family: "Liberation Sans", Arial, sans-serif; line-height: normal; }
  .nav select { font-size: 38px; color: #000; }

  article { position: relative; margin: 34px 34px 0 0; display: flex; flex-direction: column; background: #cbcccd; color: #241f4a; }
  .title { display: flex; align-items: center; background: #494366; min-height: 60px; color: #f0eeff; }
  h2 { color: #cdc9f2; font-size: 39px; line-height: 46px; white-space: nowrap; margin: 4px 34px 0 0; }
  .move { display: flex; align-items: center; gap: 9px; margin: 22px 9px 0 auto; }
  .move i, .actions i { width: 3px; height: 25px; background: currentColor; }
  .move i { background: #cdc9f2; }
  .to { width: 390px; height: 60px; color: #000; }
  .to select { font-size: 35px; font-weight: 700; }
  .actions { display: flex; align-items: center; gap: 9px; min-height: 46px; padding: 0 6px 0 4px; white-space: nowrap; }
  .actions i { background: #111; }
  .active { position: relative; color: #0808f0; background: #f0f0f2; text-decoration: underline; text-underline-offset: 4px; }
  .cursor { position: absolute; left: 11px; top: 3px; z-index: 2; }
  .back { margin: 4px 14px 0 auto; }
  .step { margin-bottom: 6px; }
  table { border-collapse: collapse; width: 100%; font-family: "Liberation Sans", Arial, sans-serif; font-size: 28px; line-height: 31px; color: #000; }
  tr { background: #f3f4f6; }
  tr:nth-child(even) { background: #e7e8ea; }
  th { width: 109px; padding: 6px 0; text-align: right; font-size: 27px; }
  td { padding: 6px 0 6px 17px; }
  td a { color: #2c2496; }
  .body { margin: 7px 6px 0 7px; min-height: 295px; background: #fdfefe; }
  .caption { position: absolute; left: 211px; top: 127px; width: 633px; padding: 12px 22px; background: rgba(255, 255, 255, .5); font: 700 68px/77px "Liberation Sans", Arial, sans-serif; color: #000; white-space: nowrap; }

  .vscroll { display: flex; flex-direction: column; }
  .hscroll { display: flex; position: relative; }
  .bevel { flex: none; background: #6a669e; border: 3px solid; border-color: #6a669e #0c0a20 #0c0a20 #6a669e; box-shadow: inset 3px 3px #aaa6e4, inset -2px -2px #46427c; }
  .vscroll button, .hscroll button { width: 47px; height: 45px; }
  .hscroll button { width: 45px; }
  .vscroll .thumb { height: 235px; }
  .hscroll .thumb { flex: 1; }
  .track { flex: 1; background: repeating-conic-gradient(#68649e 0 25%, #b2aeea 0 50%) 0 0 / 4px 4px; }
  .hscroll .track { flex: 0 0 35px; }
  .corner { background: #6a669e; }
  .patch { position: absolute; left: 30px; right: 171px; top: 0; height: 6px; background: #fdfefe; }

  footer { display: flex; gap: 7px; margin-top: 3px; padding-top: 4px; background: #d5d2cb; font-size: 32px; }
  .cell { width: 57px; min-height: 48px; display: flex; align-items: center; border: 2px solid #808080; border-width: 2px 0 0 2px; box-shadow: 4px 0 #fff; }
  .status { flex: 1; gap: 8px; }
  .zone { width: 422px; gap: 8px; box-shadow: none; }
  .grip { margin: auto 0 0 auto; }
</style>
